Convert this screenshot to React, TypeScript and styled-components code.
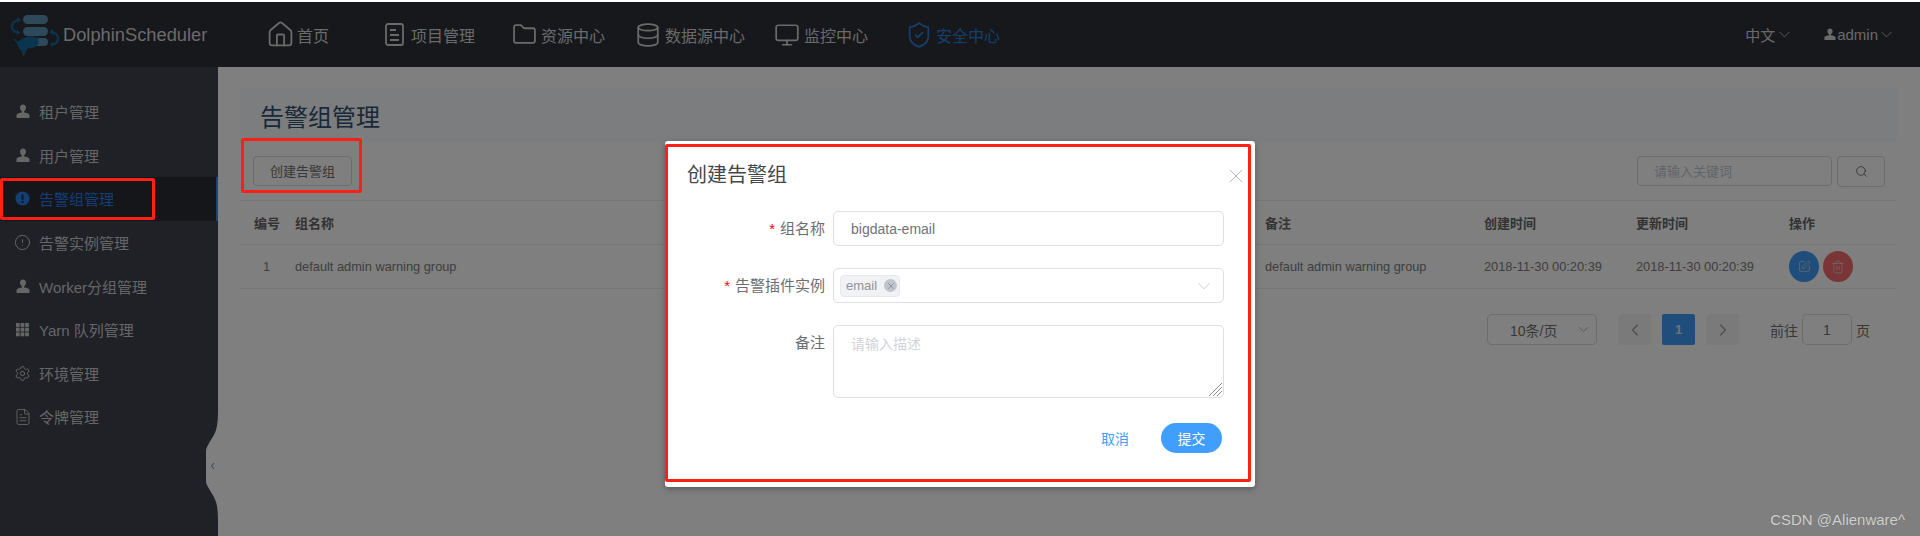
import React from 'react';
import styled, { createGlobalStyle } from 'styled-components';
import { AlertCircle, ChevronDown, ChevronLeft, ChevronRight, Database, FileText, Folder, Home, Monitor, Search, Settings, ShieldCheck, SquarePen, Trash2, X } from 'lucide-react';

const GlobalStyle = createGlobalStyle`
  html, body { margin: 0; padding: 0; background: #fff; }
  body { font-family: "Liberation Sans", "Noto Sans CJK SC", sans-serif; overflow: hidden; }
  * { box-sizing: border-box; }
`;

const Stage = styled.div`
  position: relative;
  margin-top: 2px;
  width: 1920px;
  height: 534px;
  overflow: hidden;
  background: #fff;
`;

const Header = styled.header`
  display: flex;
  align-items: center;
  height: 65px;
  background: #2c3038;
  color: #d4d4d4;
`;

const Brand = styled.div`
  display: flex;
  align-items: center;
  width: 263px;
  padding-left: 10px;
  font-size: 18.300px;
  color: #d4d4d4;
  svg { margin-right: 4px; flex: none; }
`;

const Nav = styled.nav`
  display: flex;
  align-items: center;
`;

const NavItem = styled.div<{ $ml?: number; $active?: boolean }>`
  display: flex;
  align-items: center;
  margin-left: ${p => p.$ml || 0}px;
  font-size: 16px;
  color: ${p => (p.$active ? '#2f7fdc' : '#d4d4d4')};
`;

const NavIcon = styled.span`
  display: flex;
  justify-content: center;
  width: 34px;
  svg { flex: none; }
`;

const HeaderRight = styled.div`
  display: flex;
  align-items: center;
  margin-left: auto;
  padding-right: 24px;
  gap: 30px;
`;

const Dropdown = styled.div<{ $size: number; $gap: number }>`
  display: flex;
  align-items: center;
  gap: ${p => p.$gap}px;
  font-size: ${p => p.$size}px;
  color: #d4d4d4;
  svg:last-child { margin-left: -2px; }
`;

const Body = styled.div`
  display: flex;
  height: 469px;
`;

const Sidebar = styled.aside`
  position: relative;
  width: 218px;
  flex: none;
  padding-top: 23px;
  background: #3e424c;
`;

const SideItem = styled.div<{ $active?: boolean }>`
  display: flex;
  align-items: center;
  gap: 9px;
  height: 43.600px;
  padding-left: 15px;
  font-size: 15px;
  color: ${p => (p.$active ? '#2a7de8' : '#cccccc')};
  background: ${p => (p.$active ? '#292c35' : 'transparent')};
  border-right: ${p => (p.$active ? '2px solid #3f88d8' : 'none')};
`;

const SideIcon = styled.span`
  display: flex;
  justify-content: center;
  width: 15px;
  flex: none;
  svg { flex: none; }
`;

const Collapse = styled.svg`
  position: absolute;
  top: 342px;
  right: 0;
`;

const Content = styled.main`
  flex: 1;
  padding: 21px 23px 0 22px;
`;

const TitleBar = styled.div`
  display: flex;
  align-items: center;
  height: 54px;
  padding-left: 20px;
  font-size: 24px;
  color: #34506e;
  background: #f8fafc;
`;

const Toolbar = styled.div`
  display: flex;
  align-items: flex-start;
  justify-content: space-between;
  height: 59px;
  padding: 14px 12px 0 13px;
  border-bottom: 1px solid #ebeef1;
`;

const PlainButton = styled.button`
  width: 99px;
  height: 30px;
  padding: 0 0 2px;
  font: inherit;
  font-size: 13px;
  color: #707070;
  background: #fff;
  border: 1px solid #d5d8de;
  border-radius: 4px;
`;

const SearchBox = styled.div`
  display: flex;
  gap: 5px;
`;

const SearchField = styled.input`
  width: 195px;
  height: 30px;
  padding: 0 16px;
  font: inherit;
  font-size: 13px;
  border: 1px solid #d5d8de;
  border-radius: 4px;
  background: #fff;
  &::placeholder { color: #c4c7cf; }
`;

const SearchButton = styled.div`
  display: flex;
  align-items: center;
  justify-content: center;
  width: 48px;
  height: 31px;
  color: #555;
  border: 1px solid #d5d8de;
  border-radius: 4px;
`;

const TableRow = styled.div<{ $head?: boolean }>`
  display: grid;
  grid-template-columns: 41px 970px 219px 152px 153px 1fr;
  align-items: center;
  height: 44px;
  padding-left: 14px;
  font-size: ${p => (p.$head ? 13 : 12.8)}px;
  font-weight: ${p => (p.$head ? 700 : 400)};
  color: ${p => (p.$head ? '#666' : '#7c7c7c')};
  border-bottom: 1px solid #ebeef1;
`;

const NumCell = styled.span`
  padding-left: 9px;
`;

const Actions = styled.div`
  display: flex;
  gap: 4px;
`;

const RoundButton = styled.span<{ $color: string }>`
  display: flex;
  align-items: center;
  justify-content: center;
  width: 30px;
  height: 31px;
  color: #d8d8d8;
  background: ${p => p.$color};
  border-radius: 50%;
`;

const Pager = styled.div`
  display: flex;
  align-items: center;
  height: 31px;
  margin-top: 25px;
  padding-left: 1247px;
  font-size: 14px;
  color: #707070;
`;

const SizeSelect = styled.div`
  display: flex;
  align-items: center;
  justify-content: space-between;
  width: 110px;
  height: 31px;
  padding: 0 4px 0 22px;
  border: 1px solid #d5d8de;
  border-radius: 5px;
  svg { flex: none; color: #999; }
`;

const PageBtn = styled.span<{ $active?: boolean; $ml: number }>`
  display: flex;
  align-items: center;
  justify-content: center;
  width: 33px;
  height: 31px;
  margin-left: ${p => p.$ml}px;
  font-size: 13px;
  font-weight: 700;
  color: ${p => (p.$active ? '#e4e4e4' : '#999')};
  background: ${p => (p.$active ? '#3f9bf8' : '#f4f4f5')};
  border-radius: 2px;
`;

const Jump = styled.div`
  display: flex;
  align-items: center;
  gap: 4px;
  margin-left: 31px;
`;

const JumpBox = styled.span`
  display: flex;
  align-items: center;
  justify-content: center;
  width: 50px;
  height: 31px;
  border: 1px solid #d5d8de;
  border-radius: 5px;
`;

const Overlay = styled.div`
  position: absolute;
  inset: 0;
  background: rgba(0, 0, 0, 0.5);
`;

const Modal = styled.section`
  position: absolute;
  top: 139px;
  left: 50%;
  transform: translateX(-50%);
  width: 590px;
  height: 346px;
  padding: 24px 31px 0 0;
  background: #fff;
  border-radius: 3px;
  box-shadow: 0 2px 6px rgba(0, 0, 0, 0.3);
`;

const ModalTitle = styled.h2`
  margin: 0 0 26px 22px;
  font-size: 20px;
  line-height: 20px;
  font-weight: 400;
  color: #45464a;
`;

const CloseIcon = styled(X)`
  position: absolute;
  top: 24px;
  right: 8px;
  color: #a0a4ac;
`;

const Field = styled.div`
  display: grid;
  grid-template-columns: 160px 391px;
  column-gap: 8px;
  margin-bottom: 22px;
`;

const Label = styled.label`
  height: 35px;
  line-height: 35px;
  text-align: right;
  font-size: 15px;
  color: #6c6e72;
`;

const Required = styled.span`
  margin-right: 5px;
  color: #f00;
`;

const inputBase = `
  width: 100%;
  padding: 0 17px;
  font-family: inherit;
  font-size: 14px;
  color: #707278;
  background: #fff;
  border: 1px solid #dcdfe6;
  border-radius: 5px;
  outline: none;
`;

const TextInput = styled.input`
  ${inputBase}
  height: 35px;
`;

const SelectBox = styled.div`
  display: flex;
  align-items: center;
  justify-content: space-between;
  height: 35px;
  padding: 0 8px 0 6px;
  color: #b8bcc4;
  border: 1px solid #dcdfe6;
  border-radius: 5px;
`;

const Tag = styled.span`
  display: flex;
  align-items: center;
  gap: 7px;
  height: 22px;
  padding: 0 2px 0 5px;
  font-size: 13px;
  color: #909399;
  background: #f0f2f5;
  border: 1px solid #e9e9eb;
  border-radius: 4px;
`;

const TagClose = styled.span`
  display: flex;
  align-items: center;
  justify-content: center;
  width: 13px;
  height: 13px;
  color: #606266;
  background: #c0c4cc;
  border-radius: 50%;
`;

const AreaWrap = styled.div`
  position: relative;
`;

const TextArea = styled.textarea`
  ${inputBase}
  display: block;
  height: 73px;
  padding-top: 8px;
  line-height: 20px;
  resize: none;
  &::placeholder { color: #d0d3da; }
`;

const ResizeHatch = styled.svg`
  position: absolute;
  right: 2px;
  bottom: 2px;
`;

const ModalFooter = styled.div`
  display: flex;
  align-items: center;
  justify-content: flex-end;
  gap: 32px;
  margin-top: 25px;
  padding-right: 2px;
`;

const LinkButton = styled.span`
  font-size: 14px;
  color: #409eff;
`;

const SubmitButton = styled.span`
  display: flex;
  align-items: center;
  justify-content: center;
  width: 61px;
  height: 30px;
  font-size: 14px;
  color: #fff;
  background: #409eff;
  border-radius: 15px;
`;

const Marker = styled.div<{ $x: number; $y: number; $w: number; $h: number }>`
  position: absolute;
  left: ${p => p.$x}px;
  top: ${p => p.$y}px;
  width: ${p => p.$w}px;
  height: ${p => p.$h}px;
  border: 3px solid #ff2015;
  border-radius: 2px;
  pointer-events: none;
`;

const Watermark = styled.div`
  position: absolute;
  right: 15px;
  bottom: 8px;
  font-size: 15px;
  color: #d0d0d0;
  text-shadow: 0 0 1px #666;
`;

const USER_PATH = 'M7 .5c1.900 0 3 1.500 3 3.300 0 1.500-.8 2.900-1.900 3.500v1.200c2.500.3 4.900 1 5.400 2.300V14H.5v-3.200c.5-1.300 2.900-2 5.400-2.300V7.300C4.800 6.700 4 5.300 4 3.800 4 2 5.100.5 7 .5z';

const UserSolid = ({ w = 14, h = 15 }: { w?: number; h?: number }) => (
  <svg width={w} height={h} viewBox="0 0 14 15" fill="currentColor">
    <path d={USER_PATH} />
  </svg>
);

const AlertSolid = () => (
  <svg width="15" height="15" viewBox="0 0 15 15">
    <circle cx="7.500" cy="7.500" r="7" fill="currentColor" />
    <rect x="6.500" y="3" width="2" height="6" rx="1" fill="#292c35" />
    <circle cx="7.500" cy="11" r="1.200" fill="#292c35" />
  </svg>
);

const GridIcon = () => (
  <svg width="13" height="14" viewBox="0 0 13 14" fill="currentColor">
    {[0, 4.700, 9.400].map(y =>
      [0, 4.600, 9.200].map(x => <rect key={`${x}-${y}`} x={x} y={y} width="3.700" height="3.900" />)
    )}
  </svg>
);

const ProjectIcon = () => (
  <svg width="19" height="23" viewBox="0 0 19 23" fill="none" stroke="currentColor" strokeWidth="1.800">
    <rect x="1" y="1" width="17" height="21" rx="2" />
    <path d="M5 7h6M5 12h9M5 17h9" />
  </svg>
);

const Logo = () => (
  <svg width="49" height="44" viewBox="0 0 49 44">
    <rect x="13" y="2" width="25" height="9" rx="4.500" fill="#5c93b3" />
    <rect x="13" y="14" width="25" height="9" rx="4.500" fill="#5c93b3" />
    <rect x="24" y="25" width="14" height="8" rx="4" fill="#5c93b3" />
    <path d="M10 7c-5 0-8 3-8 6.500 0 3 2 5.500 6 6" fill="none" stroke="#17699a" strokeWidth="2.200" />
    <path d="M7 4l4 3-4 3zM7 17l3.500 2.500L7 22z" fill="#17699a" />
    <path d="M40 19c5 0 8 3 8 6.500 0 3-2 5.500-6 6" fill="none" stroke="#17699a" strokeWidth="2.200" />
    <path d="M43 16l-4 3 4 3zM43 29l-3.500 2.500L43 34z" fill="#17699a" />
    <path d="M3 25c2 1 4 2.500 5 4 3-3.500 9-6 14-5.500 2 0 3 .5 4 1 1-.5 2.500-.5 3.500 0l-2 2c1 1.500 1.500 3 1 4.500-2.500 4-7 4-11 4.500l-4 8.500-2-6c-2-1.500-3.500-4-4.500-7.500C6 29 4.500 27.500 3 25z" fill="#17699a" />
  </svg>
);

const App: React.FC = () => {
  const nav = [
    { icon: <Home size={29} strokeWidth={1.500} />, label: '首页', ml: 0 },
    { icon: <ProjectIcon />, label: '项目管理', ml: 48 },
    { icon: <Folder size={25} strokeWidth={1.700} />, label: '资源中心', ml: 32 },
    { icon: <Database size={26} strokeWidth={1.600} />, label: '数据源中心', ml: 26 },
    { icon: <Monitor size={26} strokeWidth={1.600} />, label: '监控中心', ml: 25 },
    { icon: <ShieldCheck size={28} strokeWidth={1.500} />, label: '安全中心', ml: 34, active: true }
  ];

  const side = [
    { icon: <UserSolid />, label: '租户管理' },
    { icon: <UserSolid />, label: '用户管理' },
    { icon: <AlertSolid />, label: '告警组管理', active: true },
    { icon: <AlertCircle size={17} strokeWidth={1.400} />, label: '告警实例管理' },
    { icon: <UserSolid />, label: 'Worker分组管理' },
    { icon: <GridIcon />, label: 'Yarn 队列管理' },
    { icon: <Settings size={17} strokeWidth={1.400} />, label: '环境管理' },
    { icon: <FileText size={18} strokeWidth={1.200} />, label: '令牌管理' }
  ];

  return (
    <Stage>
      <GlobalStyle />
      <Header>
        <Brand>
          <Logo />
          DolphinScheduler
        </Brand>
        <Nav>
          {nav.map(item => (
            <NavItem key={item.label} $ml={item.ml} $active={item.active}>
              <NavIcon>{item.icon}</NavIcon>
              {item.label}
            </NavItem>
          ))}
        </Nav>
        <HeaderRight>
          <Dropdown $size={15} $gap={2}>
            中文
            <ChevronDown size={19} strokeWidth={1} />
          </Dropdown>
          <Dropdown $size={15} $gap={1}>
            <UserSolid w={12} h={13} />
            admin
            <ChevronDown size={19} strokeWidth={1} />
          </Dropdown>
        </HeaderRight>
      </Header>

      <Body>
        <Sidebar>
          {side.map(item => (
            <SideItem key={item.label} $active={item.active}>
              <SideIcon>{item.icon}</SideIcon>
              {item.label}
            </SideItem>
          ))}
          <Collapse width="12" height="114" viewBox="0 0 12 114">
            <path d="M12 0c0 10-.5 16-2 21-2 6-5 9-9 17-1 2-1 3-1 6v26c0 3 0 4 1 6 4 8 7 11 9 17 1.500 5 2 11 2 21z" fill="#fff" />
            <path d="M8 54l-2.500 3 2.500 3" fill="none" stroke="#5f7ca8" strokeWidth="1" />
          </Collapse>
        </Sidebar>

        <Content>
          <TitleBar>告警组管理</TitleBar>
          <Toolbar>
            <PlainButton>创建告警组</PlainButton>
            <SearchBox>
              <SearchField placeholder="请输入关键词" readOnly />
              <SearchButton>
                <Search size={13} strokeWidth={1.400} />
              </SearchButton>
            </SearchBox>
          </Toolbar>
          <TableRow $head>
            <span>编号</span>
            <span>组名称</span>
            <span>备注</span>
            <span>创建时间</span>
            <span>更新时间</span>
            <span>操作</span>
          </TableRow>
          <TableRow>
            <NumCell>1</NumCell>
            <span>default admin warning group</span>
            <span>default admin warning group</span>
            <span>2018-11-30 00:20:39</span>
            <span>2018-11-30 00:20:39</span>
            <Actions>
              <RoundButton $color="#3f9bf8">
                <SquarePen size={13} strokeWidth={1.400} />
              </RoundButton>
              <RoundButton $color="#f56c6c">
                <Trash2 size={14} strokeWidth={1.300} />
              </RoundButton>
            </Actions>
          </TableRow>
          <Pager>
            <SizeSelect>
              10条/页
              <ChevronDown size={17} strokeWidth={1} />
            </SizeSelect>
            <PageBtn $ml={21}>
              <ChevronLeft size={20} strokeWidth={1.400} />
            </PageBtn>
            <PageBtn $ml={11} $active>
              1
            </PageBtn>
            <PageBtn $ml={11}>
              <ChevronRight size={20} strokeWidth={1.400} />
            </PageBtn>
            <Jump>
              前往
              <JumpBox>1</JumpBox>页
            </Jump>
          </Pager>
        </Content>
      </Body>

      <Overlay />

      <Modal>
        <ModalTitle>创建告警组</ModalTitle>
        <CloseIcon size={22} strokeWidth={0.900} />
        <Field>
          <Label>
            <Required>*</Required>组名称
          </Label>
          <TextInput defaultValue="bigdata-email" />
        </Field>
        <Field>
          <Label>
            <Required>*</Required>告警插件实例
          </Label>
          <SelectBox>
            <Tag>
              email
              <TagClose>
                <X size={10} strokeWidth={1.200} />
              </TagClose>
            </Tag>
            <ChevronDown size={22} strokeWidth={0.800} />
          </SelectBox>
        </Field>
        <Field>
          <Label>备注</Label>
          <AreaWrap>
            <TextArea placeholder="请输入描述" />
            <ResizeHatch width="13" height="14" viewBox="0 0 13 14" stroke="#8a8a8a" strokeWidth="1">
              <path d="M0 14L13 1M4 14L13 5M8 14l5-5" />
            </ResizeHatch>
          </AreaWrap>
        </Field>
        <ModalFooter>
          <LinkButton>取消</LinkButton>
          <SubmitButton>提交</SubmitButton>
        </ModalFooter>
      </Modal>

      <Marker $x={0} $y={176} $w={155} $h={42} />
      <Marker $x={241} $y={136} $w={121} $h={55} />
      <Marker $x={665} $y={142} $w={586} $h={338} />
      <Watermark>CSDN @Alienware^</Watermark>
    </Stage>
  );
};

export default App;
